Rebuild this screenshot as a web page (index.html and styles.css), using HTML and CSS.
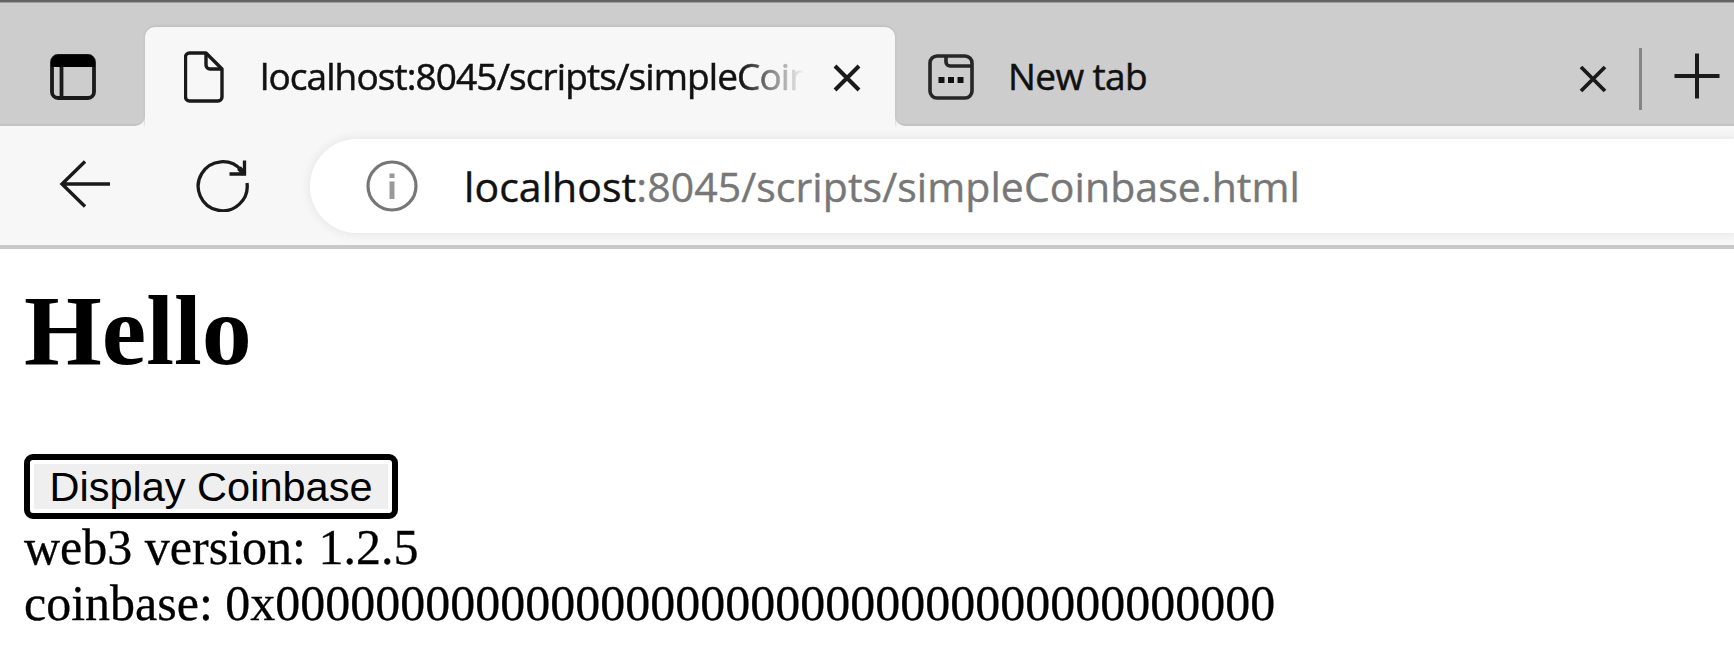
FILE: index.html
```html
<!DOCTYPE html>
<html lang="en">
<head>
<meta charset="utf-8">
<title>localhost:8045/scripts/simpleCoinbase.html</title>
<link rel="stylesheet" href="styles.css">
</head>
<body>
<header class="browser">
  <div class="window-edge"></div>
  <div class="tabs">
    <div class="tab-actions">
      <svg width="46" height="46" viewBox="0 0 46 46" fill="none" stroke="#1a1a1a" stroke-width="3.8"><rect x="2" y="2" width="42" height="42" rx="6"/><path d="M11.5 12V44"/><path d="M1 13V8a7 7 0 0 1 7-7h30a7 7 0 0 1 7 7v5z" fill="#000" stroke="none"/></svg>
    </div>
    <div class="tab-slot">
      <div class="tab-active">
        <svg class="doc-icon" width="40" height="52" viewBox="0 0 40 52" fill="none" stroke="#1a1a1a" stroke-width="3.4" stroke-linejoin="round"><path d="M5.500 2H22L38 18V46a4 4 0 0 1-4 4H5.500a4 4 0 0 1-4-4V6a4 4 0 0 1 4-4z"/><path d="M22 2V14a4 4 0 0 0 4 4H38"/></svg>
        <span class="tab-title tab-title-active">localhost:8045/scripts/simpleCoin</span>
        <svg class="close" width="28" height="28" viewBox="0 0 28 28" stroke="#1a1a1a" stroke-width="4"><path d="M2 2L26 26M26 2L2 26"/></svg>
      </div>
    </div>
    <div class="tab-rest">
      <svg class="newtab-icon" width="46" height="46" viewBox="0 0 46 46" fill="none" stroke="#262626" stroke-width="3.600"><rect x="2" y="2" width="42" height="42" rx="7"/><path d="M18 2V8a4 4 0 0 0 4 4H44"/><path d="M10.500 26h6M20 26h6M29.500 26h6" stroke="#111" stroke-width="6"/></svg>
      <span class="tab-title">New tab</span>
      <svg class="close close-inactive" width="28" height="28" viewBox="0 0 28 28" stroke="#1a1a1a" stroke-width="3.8"><path d="M2 2L26 26M26 2L2 26"/></svg>
      <div class="divider"></div>
      <svg class="plus" width="46" height="46" viewBox="0 0 46 46" stroke="#1a1a1a" stroke-width="4"><path d="M0.500 23H45.500M23 0.500V45.500"/></svg>
    </div>
  </div>
  <div class="toolbar">
    <svg class="back" width="52" height="50" viewBox="0 0 52 50" fill="none" stroke="#1a1a1a" stroke-width="3.400"><path d="M51 25H3M26 2.500L3 25L26 47.500"/></svg>
    <svg class="reload" width="54" height="54" viewBox="0 0 54 54" fill="none" stroke="#1a1a1a" stroke-width="3.300"><path d="M51 25A24.500 24.500 0 1 1 45.500 12.500"/><path d="M48.500 2.500V16H33.500"/><path d="M43 10l5.500 6" stroke-width="5"/></svg>
    <div class="address">
      <svg class="info" width="52" height="52" viewBox="0 0 52 52" fill="none" stroke="#767676" stroke-width="3.200"><circle cx="26" cy="26" r="24"/><path d="M26 21.500V39" stroke="#999" stroke-width="5"/><path d="M26 13.500V18" stroke="#999" stroke-width="5"/></svg>
      <span class="url"><span class="host">localhost</span>:8045/scripts/simpleCoinbase.html</span>
    </div>
  </div>
</header>
<main class="page">
  <h1 class="heading">Hello</h1>
  <button class="display-button">Display Coinbase</button>
  <div class="line">web3 version: 1.2.5</div>
  <div class="line">coinbase: 0x0000000000000000000000000000000000000000</div>
</main>
</body>
</html>
```
FILE: styles.css
```css
body { margin: 0; background: #fff; color: #000; overflow: hidden; }
* { box-sizing: border-box; }
svg { display: block; flex: none; }
.browser { height: 249px; background: #f7f7f7; border-bottom: 4px solid #c9c9c9; }
.window-edge { height: 3px; background: #636363; border-bottom: 1px solid #a0a0a0; }
.tabs { display: flex; height: 123px; }
.tab-actions { width: 145px; flex: none; padding: 51px 0 0 50px; background: #cdcdcd; border-bottom: 2px solid #c2c2c2; border-bottom-right-radius: 10px; }
.tab-slot { width: 750px; flex: none; padding-top: 24px; background: linear-gradient(#cdcdcd 60px, #f7f7f7 60px); }
.tab-active { display: flex; align-items: center; height: 100px; padding: 0 35px 0 39px; background: #f7f7f7; border-radius: 10px 10px 0 0; box-shadow: 0 -1px 3px #bbb; clip-path: inset(-4px -4px 0 -4px); }
.doc-icon { margin-right: 36px; }
.tab-title { font: 37px/50px "Open Sans", sans-serif; letter-spacing: -0.92px; white-space: nowrap; color: #111; -webkit-text-stroke: 0.5px #111; margin-top: -3px; }
.tab-title-active { width: 546px; -webkit-mask-image: linear-gradient(90deg, #000 480px, transparent 544px); mask-image: linear-gradient(90deg, #000 480px, transparent 544px); }
.close { margin: 2px 0 0 27px; }
.tab-rest { flex: 1; display: flex; align-items: center; padding-left: 33px; background: #cdcdcd; border-bottom: 2px solid #c2c2c2; border-bottom-left-radius: 10px; }
.newtab-icon { margin: 27px 34px 0 0; }
.tab-rest .tab-title { margin-top: 24px; letter-spacing: -0.6px; }
.close-inactive { margin: 30px 0 0 auto; }
.divider { width: 3px; height: 62px; margin: 30px 32px 0 32px; background: #858585; }
.plus { margin: 24px 14px 0 0; }
.toolbar { display: flex; height: 119px; padding-top: 13px; }
.back { margin: 20px 0 0 59px; }
.reload { margin: 19px 0 0 85px; }
.address { flex: 1; display: flex; align-items: center; height: 94px; margin-left: 60px; padding-left: 56px; background: #fff; border-radius: 47px 0 0 47px; box-shadow: 0 0 9px 2px #e8e8e8; clip-path: inset(-12px 0 -12px -12px); }
.info { margin-right: 46px; }
.url { font: 41px/60px "Open Sans", sans-serif; letter-spacing: 0.06px; color: #777; -webkit-text-stroke: 0.4px; white-space: nowrap; }
.host { color: #111; }
.page { padding: 26px 0 0 24px; font: 50px/56px "Liberation Serif", serif; }
.heading { margin: 0; font-size: 100px; line-height: 112px; font-weight: bold; }
.display-button { display: block; width: 374px; height: 65px; margin: 67px 0 0; padding: 0; border: 6px solid #000; border-radius: 9px; background: #efefef; box-shadow: inset 0 0 0 4px #fff; font: 41.5px/51px "Liberation Sans", sans-serif; color: #000; }
.line { white-space: nowrap; -webkit-text-stroke: 0.3px #000; }
```
